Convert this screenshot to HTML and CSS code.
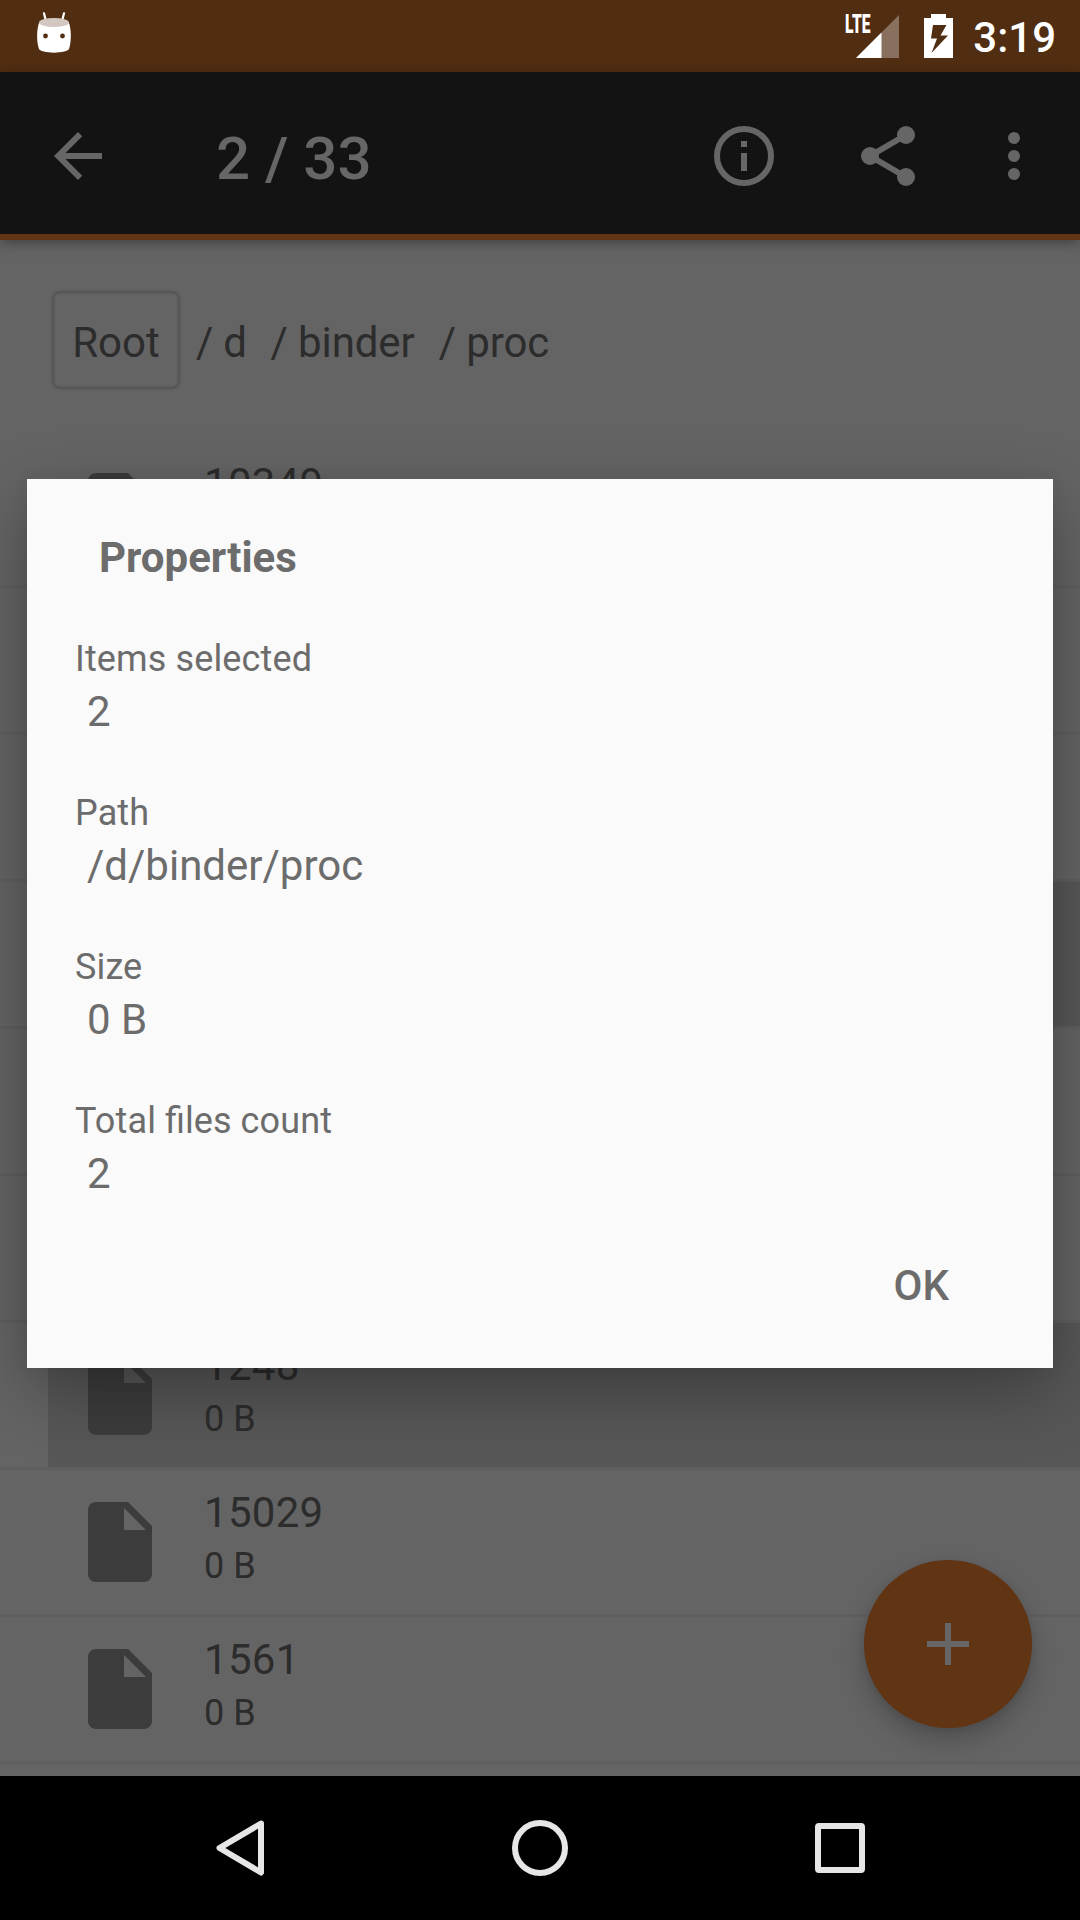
FILE: index.html
```html
<!DOCTYPE html>
<html lang="en">
<head>
<meta charset="utf-8">
<title>File manager</title>
<link rel="stylesheet" href="styles.css">
</head>
<body>
<svg class="sprite" aria-hidden="true">
  <symbol id="file" viewBox="0 0 24 24"><path d="M6 2c-1.1 0-2 .9-2 2v16c0 1.1.9 2 2 2h12c1.1 0 2-.9 2-2V8l-6-6H6zm7 7V3.5L18.5 9H13z"/></symbol>
</svg>
<div class="screen">
  <header class="status">
    <svg class="droid" viewBox="0 0 36 42">
      <path d="M8 1.3l2 8M28 1.3l-2 8" stroke="#fff" stroke-width="2.2" stroke-linecap="round"/>
      <path d="M3 11C1 16 .2 28 2.8 36.500C4 42 32 42 33.200 36.500C35.800 28 35 16 33 11z" fill="#fff"/>
      <ellipse cx="18" cy="10.500" rx="15" ry="4.500" fill="#d3c8c1"/>
      <circle cx="9.500" cy="24" r="2.400" fill="#512d12"/><circle cx="26.500" cy="24" r="2.400" fill="#512d12"/>
    </svg>
    <div class="status-right">
      <span class="lte">LTE</span>
      <svg class="signal" viewBox="0 0 43 43"><path d="M43 0v43H0z" fill="#fff" fill-opacity=".32"/><path d="M25.500 17.500V43H0z" fill="#fff"/></svg>
      <svg class="battery" viewBox="0 0 29 44"><path fill="#fff" fill-rule="evenodd" d="M7 0h15v4h7v40H0V4h7zM9 11L7 24.500h6L7.500 39 24 21.500h-7.500L22.500 11z"/></svg>
      <span class="clock">3:19</span>
    </div>
  </header>
  <nav class="appbar">
    <svg class="icon" viewBox="0 0 24 24"><path d="M20 11H7.830l5.590-5.590L12 4l-8 8 8 8 1.410-1.410L7.830 13H20v-2z"/></svg>
    <h1 class="count">2 / 33</h1>
    <svg class="icon" viewBox="0 0 24 24"><path d="M11 7h2v2h-2zm0 4h2v6h-2z"/><circle cx="12" cy="12" r="9" fill="none" stroke="#666" stroke-width="2"/></svg>
    <svg class="icon share" viewBox="0 0 24 24"><path d="M18 5L6 12l12 7" fill="none" stroke="#666" stroke-width="2"/><circle cx="18" cy="5" r="3"/><circle cx="6" cy="12" r="3"/><circle cx="18" cy="19" r="3"/></svg>
    <svg class="icon more" viewBox="0 0 24 24"><circle cx="12" cy="6" r="2"/><circle cx="12" cy="12" r="2"/><circle cx="12" cy="18" r="2"/></svg>
  </nav>
  <main class="content">
    <div class="crumbs">
      <span class="root">Root</span><span class="crumb c1">/ d</span><span class="crumb c2">/ binder</span><span class="crumb">/ proc</span>
    </div>
    <ul class="files">
      <li class="file"><svg class="file-icon"><use href="#file"/></svg><div><p class="name">10349</p></div></li>
      <li class="file"></li>
      <li class="file"></li>
      <li class="file selected"></li>
      <li class="file"></li>
      <li class="file"></li>
      <li class="file selected"><svg class="file-icon"><use href="#file"/></svg><div><p class="name">1248</p><p class="size">0 B</p></div></li>
      <li class="file"><svg class="file-icon"><use href="#file"/></svg><div><p class="name">15029</p><p class="size">0 B</p></div></li>
      <li class="file"><svg class="file-icon"><use href="#file"/></svg><div><p class="name">1561</p><p class="size">0 B</p></div></li>
    </ul>
    <div class="fab"><svg class="icon" viewBox="0 0 24 24"><path d="M19 13h-6v6h-2v-6H5v-2h6V5h2v6h6v2z"/></svg></div>
  </main>
  <footer class="navbar">
    <svg viewBox="0 0 60 60"><path d="M51 5.500L9.500 30 51 54.500z" stroke-linejoin="round"/></svg>
    <svg viewBox="0 0 60 60"><circle cx="30" cy="30" r="25"/></svg>
    <svg viewBox="0 0 60 60"><rect x="8" y="8" width="44" height="44" rx="1" stroke-linejoin="round"/></svg>
  </footer>
  <section class="dialog">
    <h2 class="dialog-title">Properties</h2>
    <dl class="props">
      <div class="prop"><dt>Items selected</dt><dd>2</dd></div>
      <div class="prop"><dt>Path</dt><dd>/d/binder/proc</dd></div>
      <div class="prop"><dt>Size</dt><dd>0 B</dd></div>
      <div class="prop"><dt>Total <span class="lig">files</span> count</dt><dd>2</dd></div>
    </dl>
    <button class="ok">OK</button>
  </section>
</div>
</body>
</html>
```
FILE: styles.css
```css
* { box-sizing: border-box; margin: 0; padding: 0; }
body { font-family: Roboto, "Liberation Sans", sans-serif; background: #000; }
.sprite { position: absolute; width: 0; height: 0; }
.screen {
  position: relative;
  width: 1080px;
  height: 1920px;
  overflow: hidden;
  display: flex;
  flex-direction: column;
}

/* status bar */
.status {
  height: 72px;
  background: #512d12;
  display: flex;
  justify-content: space-between;
  padding: 12px 24px 0 36px;
}
.droid { width: 36px; height: 42px; }
.status-right { display: flex; align-items: flex-start; color: #fff; }
.lte {
  font-size: 26px;
  font-weight: 900;
  line-height: 25px;
  width: 11px;
  white-space: nowrap;
  transform: scaleX(.6);
  transform-origin: 0 0;
}
.signal { width: 43px; height: 43px; margin: 3px 25px 0 0; }
.battery { width: 29px; height: 44px; margin: 2px 20px 0 0; }
.clock { font-size: 42px; font-weight: 500; line-height: 51px; }

/* action bar */
.appbar {
  position: relative;
  z-index: 1;
  height: 168px;
  background: #131313;
  border-bottom: 6px solid #613414;
  box-shadow: 0 3px 12px rgba(0, 0, 0, .35);
  display: flex;
  align-items: center;
  padding: 6px 30px 0 42px;
}
.icon { width: 72px; height: 72px; fill: #666; flex: none; }
.count {
  flex: 1;
  padding: 5px 0 0 102px;
  font-size: 60px;
  font-weight: 500;
  line-height: 70px;
  color: #666;
}
.share { margin-left: 72px; }
.more { margin-left: 54px; }

/* file list */
.content { position: relative; height: 1536px; overflow: hidden; background: #646464; color: #2c2c2c; }
.crumbs { display: flex; padding: 51px 0 0 52px; height: 201px; font-size: 42px; line-height: 98px; }
.root {
  width: 128px;
  height: 98px;
  border: 2px solid #565656;
  border-radius: 8px;
  text-align: center;
  line-height: 99px;
  box-shadow: 0 0 2px #565656, inset 0 0 2px #565656;
}
.crumb { margin-left: 16px; padding-top: 3px; white-space: pre; letter-spacing: -.1px; }
.crumb.c1 { letter-spacing: -.3px; }
.crumb.c2 { margin-left: 24px; }
.c2 + .crumb { margin-left: 24px; }
.files { list-style: none; }
.file { height: 147px; border-bottom: 3px solid #5f5f5f; display: flex; padding-left: 72px; }
.selected { background: linear-gradient(#575757, #575757) 48px 0 no-repeat padding-box; }
.file-icon { width: 96px; height: 96px; margin: 24px 36px 0 0; fill: #3c3c3c; }
.name { font-size: 42px; line-height: 49px; margin: 18px 0 8px; letter-spacing: .3px; }
.size { font-size: 36px; line-height: 42px; }
.fab {
  position: absolute;
  right: 48px;
  bottom: 48px;
  width: 168px;
  height: 168px;
  border-radius: 50%;
  background: #613414;
  box-shadow: 0 12px 26px rgba(0, 0, 0, .22), 0 2px 6px rgba(0, 0, 0, .08);
  display: flex;
  align-items: center;
  justify-content: center;
}

/* system navigation */
.navbar { height: 144px; background: #000; display: flex; justify-content: center; align-items: center; gap: 240px; }
.navbar svg { width: 60px; height: 60px; fill: none; stroke: #e6e6e6; stroke-width: 6; }

/* properties dialog */
.dialog {
  position: absolute;
  z-index: 2;
  left: 27px;
  top: 479px;
  width: 1026px;
  height: 889px;
  background: #fafafa;
  color: #6c6c6c;
  box-shadow: 0 24px 64px rgba(0, 0, 0, .3), 0 0 16px rgba(0, 0, 0, .05);
  display: flex;
  flex-direction: column;
}
.dialog-title { font-size: 42px; font-weight: 700; line-height: 50px; padding: 54px 72px 0; }
.props { padding: 55px 48px 0; }
.prop { height: 154px; }
.prop dt { font-size: 36px; line-height: 42px; letter-spacing: .13px; font-variant-ligatures: common-ligatures; }
.lig { letter-spacing: 0; }
.prop dd { font-size: 42px; line-height: 50px; padding: 7px 0 0 12px; }
.ok {
  align-self: flex-end;
  margin: 7px 104px 0 0;
  border: 0;
  background: none;
  color: inherit;
  font: 500 42px/50px Roboto, "Liberation Sans", sans-serif;
}
```
